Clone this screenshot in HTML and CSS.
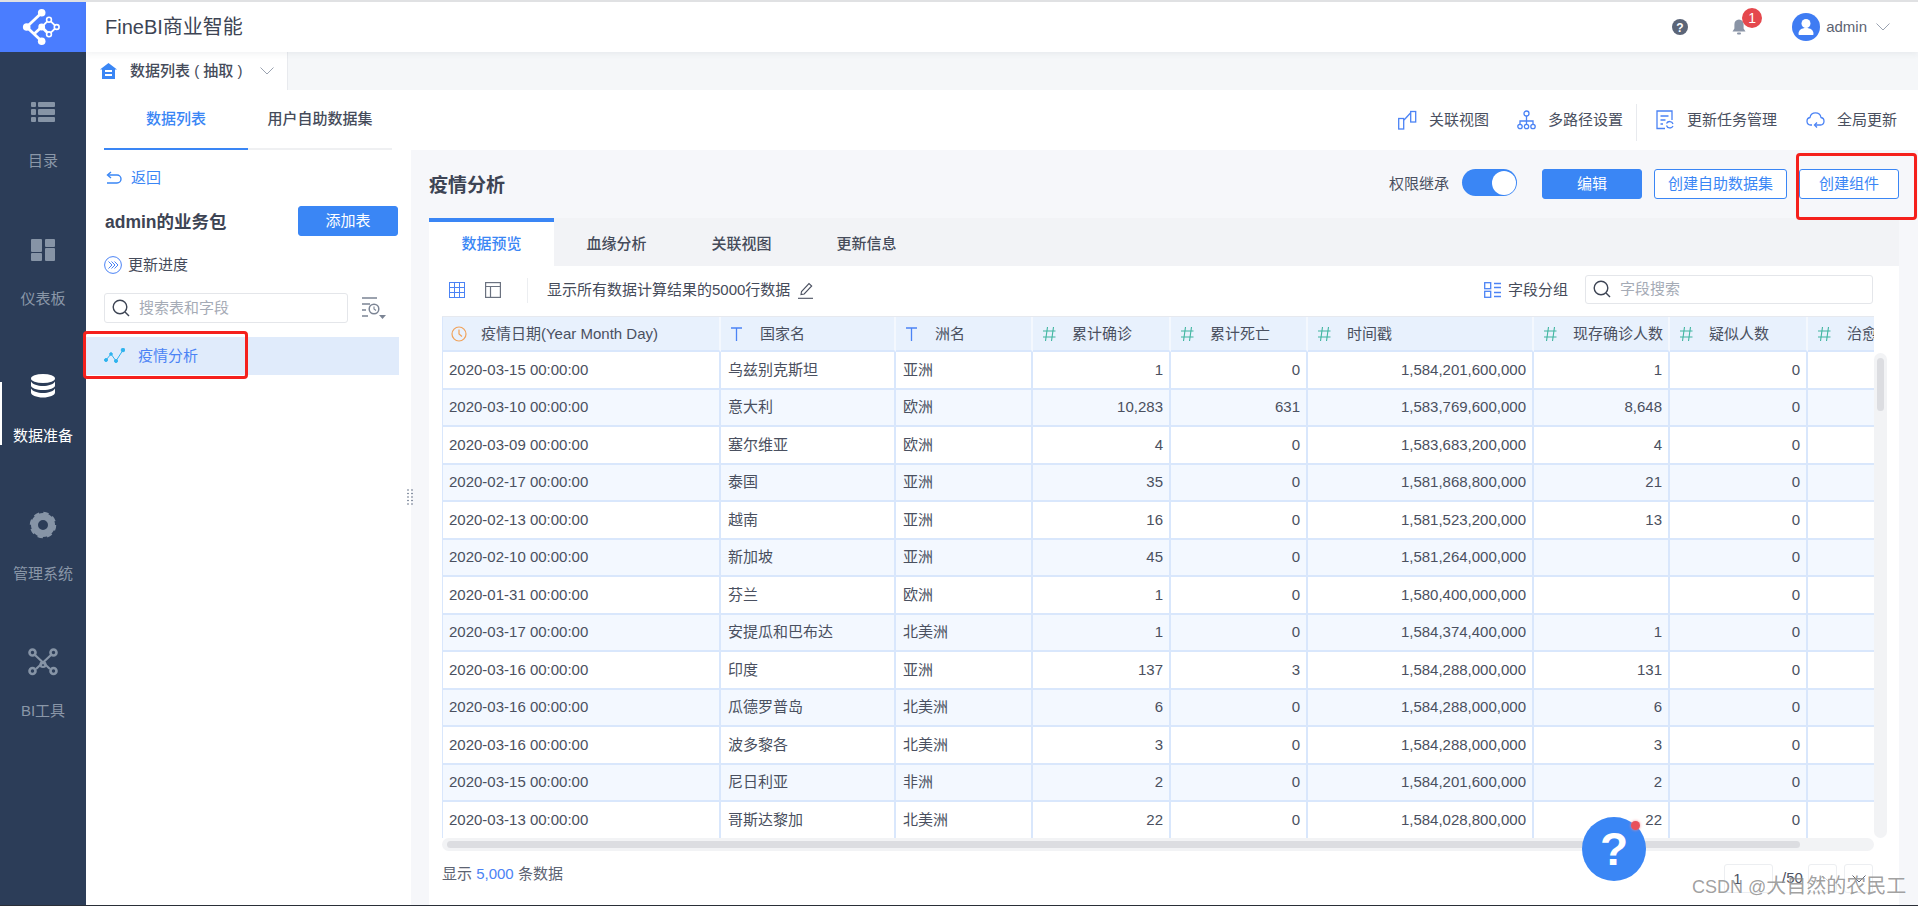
FILE: index.html
```html
<!DOCTYPE html>
<html lang="zh">
<head>
<meta charset="utf-8">
<title>FineBI商业智能</title>
<link rel="stylesheet" href="styles.css">
</head>
<body>
<div class="app">
  <aside class="sidebar">
    <div class="logo">
      <svg width="86" height="50" viewBox="0 0 86 50">
        <g fill="none" stroke="#fff" stroke-width="2.800">
          <path d="M41.7 10.7 26.7 25 41.7 39.3M34 32 41.7 25 49 32.3"/>
        </g>
        <path d="M49 32.300 56.700 25 49 17.700 41.700 25" fill="none" stroke="#fff" stroke-width="1.800"/>
        <g fill="#fff"><circle cx="41.7" cy="10.7" r="3.8"/><circle cx="26.7" cy="25" r="3.8"/><circle cx="41.7" cy="25" r="3.4"/><circle cx="41.7" cy="39.3" r="3.8"/></g>
        <g fill="#4a7dff" stroke="#fff" stroke-width="1.600"><circle cx="49" cy="17.7" r="2.4"/><circle cx="56.7" cy="25" r="2.4"/><circle cx="49" cy="32.3" r="2.4"/></g>
      </svg>
    </div>
    <nav class="nav">
      <a class="nav-item">
        <svg width="30" height="30" viewBox="0 0 30 30" fill="#8694a6"><rect x="3" y="5" width="5" height="5" rx="1"/><rect x="10" y="5" width="17" height="5" rx="1"/><rect x="3" y="12" width="5" height="6" rx="1"/><rect x="10" y="12" width="17" height="6" rx="1"/><rect x="3" y="20" width="5" height="5" rx="1"/><rect x="10" y="20" width="17" height="5" rx="1"/></svg>
        <span>目录</span>
      </a>
      <a class="nav-item">
        <svg width="30" height="30" viewBox="0 0 30 30" fill="#8694a6"><rect x="3" y="4" width="11" height="13" rx="1"/><rect x="17" y="4" width="10" height="8" rx="1"/><rect x="3" y="18" width="11" height="8" rx="1"/><rect x="17" y="13" width="10" height="13" rx="1"/></svg>
        <span>仪表板</span>
      </a>
      <a class="nav-item active">
        <svg width="30" height="30" viewBox="0 0 30 30" fill="#fff"><ellipse cx="15" cy="6.5" rx="12" ry="4.5"/><path d="M3 9.500v4c0 2.600 5.400 4.500 12 4.500s12-1.900 12-4.500v-4c-1.600 2.800-6.500 4.500-12 4.500S4.600 12.300 3 9.500z"/><path d="M3 16.500v4c0 2.600 5.400 5 12 5s12-2.400 12-5v-4c-1.600 2.800-6.500 4.500-12 4.500s-10.400-1.700-12-4.500z"/></svg>
        <span>数据准备</span>
      </a>
      <a class="nav-item">
        <svg width="30" height="30" viewBox="0 0 30 30" fill="none" stroke="#8694a6"><circle cx="15" cy="15" r="8.500" stroke-width="7"/><circle cx="15" cy="15" r="11.500" stroke-width="3.500" stroke-dasharray="5.030 4"/></svg>
        <span>管理系统</span>
      </a>
      <a class="nav-item">
        <svg width="30" height="30" viewBox="0 0 30 30" fill="none" stroke="#8694a6" stroke-width="2.600"><circle cx="4.500" cy="5.500" r="3"/><circle cx="25.500" cy="5.500" r="3"/><circle cx="4.500" cy="24" r="3"/><circle cx="25.500" cy="24" r="3"/><circle cx="15" cy="17.500" r="2.500" stroke-width="2.200"/><path d="M7 8 22 22M23 8 8 22" stroke-width="2.200"/></svg>
        <span>BI工具</span>
      </a>
    </nav>
  </aside>

  <main class="main">
    <header class="topbar">
      <div class="brand">FineBI商业智能</div>
      <div class="top-right">
        <svg class="help-ic" width="16" height="16" viewBox="0 0 16 16"><circle cx="8" cy="8" r="8" fill="#5b6578"/><text x="8" y="12.500" class="help-q">?</text></svg>
        <div class="bell">
          <svg width="16" height="18" viewBox="0 0 16 18" fill="#8a94a6"><path d="M8 1.500c-3 0-4.600 2.200-4.600 5v4L1.500 13.500h13l-1.900-3v-4c0-2.800-1.600-5-4.600-5z"/><rect x="6" y="14.500" width="4" height="2" rx="1"/></svg>
          <span class="badge">1</span>
        </div>
        <svg class="avatar" width="28" height="28" viewBox="0 0 28 28"><circle cx="14" cy="14" r="14" fill="#3f7cf3"/><circle cx="14" cy="10.500" r="4.500" fill="#fff"/><path d="M6.500 21c0-4 3-6 7.500-6s7.500 2 7.500 6c0 .6-.4 1-1 1h-13c-.6 0-1-.4-1-1z" fill="#fff"/></svg>
        <span class="user">admin</span>
        <svg width="14" height="8" viewBox="0 0 14 8" fill="none" stroke="#9aa2b0"><path d="M.5.500 7 7 13.500.500"/></svg>
      </div>
    </header>

    <div class="strip">
      <div class="strip-tab">
        <svg width="17" height="16" viewBox="0 0 17 16"><path d="M8.500 0 0 6.500h2V16h13V6.500h2z" fill="#3a86f5"/><rect x="5" y="7" width="7" height="2" fill="#fff"/><rect x="5" y="11" width="7" height="2" fill="#fff"/></svg>
        <span>数据列表 ( 抽取 )</span>
        <svg width="14" height="8" viewBox="0 0 14 8" fill="none" stroke="#9aa2b0"><path d="M.5.500 7 7 13.500.500"/></svg>
      </div>
    </div>

    <div class="toolrow">
      <div class="left-tabs">
        <div class="left-tab on">数据列表</div>
        <div class="left-tab">用户自助数据集</div>
      </div>
      <div class="tools">
        <div class="tool t1">
          <svg width="19" height="20" viewBox="0 0 19 20" fill="none" stroke="#4b83f5" stroke-width="1.300"><rect x=".7" y="8.500" width="5" height="10.500"/><rect x="12.700" y="1.500" width="5" height="10.500"/><path d="M6 10 12.500 3"/></svg>
          <span>关联视图</span>
        </div>
        <div class="tool t2">
          <svg width="19" height="20" viewBox="0 0 19 20" fill="none" stroke="#4b83f5" stroke-width="1.300"><circle cx="9.500" cy="3.500" r="2.500"/><circle cx="3" cy="16.500" r="2.200"/><circle cx="9.500" cy="16.500" r="2.200"/><circle cx="16" cy="16.500" r="2.200"/><path d="M9.500 6v8M3 14v-3h13v3"/></svg>
          <span>多路径设置</span>
        </div>
        <i class="tool-sep"></i>
        <div class="tool t3">
          <svg width="19" height="20" viewBox="0 0 19 20" fill="none" stroke="#4b83f5" stroke-width="1.300"><path d="M9 18.500H1V1h15v9"/><path d="M4.500 6h8M4.500 10h5M4.500 14h2.500"/><path d="M17 14a3.500 3.500 0 0 0-6.500-.5M10.500 15.500a3.500 3.500 0 0 0 6.500 .5"/></svg>
          <span>更新任务管理</span>
        </div>
        <div class="tool t4">
          <svg width="19" height="20" viewBox="0 0 19 20" fill="none" stroke="#4b83f5" stroke-width="1.300"><path d="M6 15H4.500a3.800 3.800 0 0 1-.5-7.500 5.600 5.600 0 0 1 11 0 3.800 3.800 0 0 1-.5 7.500H9"/><path d="M11 12.500 8.500 15l2.500 2.500"/></svg>
          <span>全局更新</span>
        </div>
      </div>
    </div>

    <div class="workspace">
      <section class="left">
        <div class="back">
          <svg width="16" height="14" viewBox="0 0 16 14" fill="none" stroke="#3a86f5" stroke-width="1.400"><path d="M5 1 1.500 4 5 7"/><path d="M2 4h9a3.800 3.800 0 0 1 0 8H1"/></svg>
          <span>返回</span>
        </div>
        <div class="pkg">
          <h2>admin的业务包</h2>
          <button class="btn solid add">添加表</button>
        </div>
        <div class="progress">
          <svg width="18" height="18" viewBox="0 0 18 18" fill="none" stroke="#4b83f5"><circle cx="9" cy="9" r="8.400"/><path d="M4.500 5.500 8 9l-3.500 3.500M7.500 5.500 11 9l-3.500 3.500M10.500 5.500 14 9l-3.500 3.500"/></svg>
          <span>更新进度</span>
        </div>
        <div class="search-row">
          <div class="searchbox left-search">
            <svg width="18" height="18" viewBox="0 0 18 18" fill="none" stroke="#3d4454" stroke-width="1.400"><circle cx="8" cy="8" r="6.800"/><path d="M13 13l4 4"/></svg>
            <span>搜索表和字段</span>
          </div>
          <svg width="24" height="22" viewBox="0 0 24 22" fill="none" stroke="#7b8494" stroke-width="1.500"><path d="M0 1h15M0 7h8M0 13h4M0 19h6"/><circle cx="12" cy="12" r="4.800"/><path d="M12 9.500V12l2 1.500" stroke-width="1.100"/><path d="M17 18h7l-3.500 4z" fill="#7b8494" stroke="none"/></svg>
        </div>
        <div class="list-item">
          <svg width="21" height="16" viewBox="0 0 21 16" fill="#2eb3ee" stroke="#2eb3ee"><path d="M2 12 7 6l5 7 7-11" fill="none" stroke-width="1"/><circle cx="2" cy="12" r="1.500"/><circle cx="7" cy="6" r="1.300"/><circle cx="12" cy="13" r="1.500"/><circle cx="19" cy="2" r="1.800"/></svg>
          <span>疫情分析</span>
        </div>
        <svg class="grip" width="6" height="16" viewBox="0 0 6 16" fill="#5c6a80"><circle cx="1" cy="1" r=".8"/><circle cx="5" cy="1" r=".8"/><circle cx="1" cy="4.500" r=".8"/><circle cx="5" cy="4.500" r=".8"/><circle cx="1" cy="8" r=".8"/><circle cx="5" cy="8" r=".8"/><circle cx="1" cy="11.500" r=".8"/><circle cx="5" cy="11.500" r=".8"/><circle cx="1" cy="15" r=".8"/><circle cx="5" cy="15" r=".8"/></svg>
      </section>

      <section class="right">
        <div class="head">
          <h1>疫情分析</h1>
          <div class="head-actions">
            <span class="perm">权限继承</span>
            <div class="switch"><i></i></div>
            <button class="btn solid edit">编辑</button>
            <button class="btn outline dataset">创建自助数据集</button>
            <button class="btn outline comp">创建组件</button>
          </div>
        </div>
        <div class="tabs">
          <div class="tab on">数据预览</div>
          <div class="tab">血缘分析</div>
          <div class="tab">关联视图</div>
          <div class="tab">更新信息</div>
        </div>
        <div class="content">
          <div class="subbar">
            <svg class="ic-grid" width="16" height="16" viewBox="0 0 16 16" fill="none" stroke="#4b83f5"><rect x=".5" y=".5" width="15" height="15"/><path d="M.5 5.500h15M.5 10.500h15M5.500 .5v15M10.500 .5v15"/></svg>
            <svg class="ic-layout" width="16" height="16" viewBox="0 0 16 16" fill="none" stroke="#6b7280" stroke-width="1.200"><rect x=".6" y=".6" width="14.800" height="14.800"/><path d="M.6 4.500h14.800M5.500 4.500v10.900"/></svg>
            <i class="sub-sep"></i>
            <span class="sub-text">显示所有数据计算结果的5000行数据</span>
            <svg class="ic-pen" width="15" height="17" viewBox="0 0 15 17" fill="none" stroke="#4a5060" stroke-width="1.100"><path d="M3 12.500 3.500 9.500 11 1.500l2.700 2.500-7.500 8z"/><path d="M0 16.300h15"/></svg>
            <div class="sub-right">
              <svg width="17" height="16" viewBox="0 0 17 16" fill="none" stroke="#4b83f5" stroke-width="1.300"><rect x=".7" y=".7" width="6" height="6"/><rect x=".7" y="9.300" width="6" height="6"/><path d="M10 1.500h7M10 5.500h7M10 10.500h7M10 14.500h7"/></svg>
              <span class="group-txt">字段分组</span>
              <div class="searchbox field-search">
                <svg width="18" height="18" viewBox="0 0 18 18" fill="none" stroke="#3d4454" stroke-width="1.400"><circle cx="8" cy="8" r="6.800"/><path d="M13 13l4 4"/></svg>
                <span>字段搜索</span>
              </div>
            </div>
          </div>

          <div class="table-area">
            <div class="table-clip">
              <div class="grid">
                <div class="row head-row">
                  <div class="cell"><svg width="16" height="16" viewBox="0 0 16 16" fill="none" stroke="#f0a25a" stroke-width="1.200"><circle cx="8" cy="8" r="7"/><path d="M8 3.500V8l3 2.500"/></svg><span>疫情日期(Year Month Day)</span></div>
                  <div class="cell"><svg width="16" height="16" viewBox="0 0 16 16" fill="none" stroke="#4b83f5" stroke-width="1.300"><path d="M1 2h11M6.500 2v13"/></svg><span>国家名</span></div>
                  <div class="cell"><svg width="16" height="16" viewBox="0 0 16 16" fill="none" stroke="#4b83f5" stroke-width="1.300"><path d="M1 2h11M6.500 2v13"/></svg><span>洲名</span></div>
                  <div class="cell"><svg width="16" height="16" viewBox="0 0 16 16" fill="none" stroke="#3fb5a0" stroke-width="1.100"><path d="M5.500 1 3.500 15M11.500 1 9.500 15M1 5h12.500M1 11h12.500"/></svg><span>累计确诊</span></div>
                  <div class="cell"><svg width="16" height="16" viewBox="0 0 16 16" fill="none" stroke="#3fb5a0" stroke-width="1.100"><path d="M5.500 1 3.500 15M11.500 1 9.500 15M1 5h12.500M1 11h12.500"/></svg><span>累计死亡</span></div>
                  <div class="cell"><svg width="16" height="16" viewBox="0 0 16 16" fill="none" stroke="#3fb5a0" stroke-width="1.100"><path d="M5.500 1 3.500 15M11.500 1 9.500 15M1 5h12.500M1 11h12.500"/></svg><span>时间戳</span></div>
                  <div class="cell"><svg width="16" height="16" viewBox="0 0 16 16" fill="none" stroke="#3fb5a0" stroke-width="1.100"><path d="M5.500 1 3.500 15M11.500 1 9.500 15M1 5h12.500M1 11h12.500"/></svg><span>现存确诊人数</span></div>
                  <div class="cell"><svg width="16" height="16" viewBox="0 0 16 16" fill="none" stroke="#3fb5a0" stroke-width="1.100"><path d="M5.500 1 3.500 15M11.500 1 9.500 15M1 5h12.500M1 11h12.500"/></svg><span>疑似人数</span></div>
                  <div class="cell"><svg width="16" height="16" viewBox="0 0 16 16" fill="none" stroke="#3fb5a0" stroke-width="1.100"><path d="M5.500 1 3.500 15M11.500 1 9.500 15M1 5h12.500M1 11h12.500"/></svg><span>治愈人数</span></div>
                </div>
                <div class="row"><div class="cell">2020-03-15 00:00:00</div><div class="cell">乌兹别克斯坦</div><div class="cell">亚洲</div><div class="cell num">1</div><div class="cell num">0</div><div class="cell num">1,584,201,600,000</div><div class="cell num">1</div><div class="cell num">0</div><div class="cell num"></div></div>
                <div class="row"><div class="cell">2020-03-10 00:00:00</div><div class="cell">意大利</div><div class="cell">欧洲</div><div class="cell num">10,283</div><div class="cell num">631</div><div class="cell num">1,583,769,600,000</div><div class="cell num">8,648</div><div class="cell num">0</div><div class="cell num"></div></div>
                <div class="row"><div class="cell">2020-03-09 00:00:00</div><div class="cell">塞尔维亚</div><div class="cell">欧洲</div><div class="cell num">4</div><div class="cell num">0</div><div class="cell num">1,583,683,200,000</div><div class="cell num">4</div><div class="cell num">0</div><div class="cell num"></div></div>
                <div class="row"><div class="cell">2020-02-17 00:00:00</div><div class="cell">泰国</div><div class="cell">亚洲</div><div class="cell num">35</div><div class="cell num">0</div><div class="cell num">1,581,868,800,000</div><div class="cell num">21</div><div class="cell num">0</div><div class="cell num"></div></div>
                <div class="row"><div class="cell">2020-02-13 00:00:00</div><div class="cell">越南</div><div class="cell">亚洲</div><div class="cell num">16</div><div class="cell num">0</div><div class="cell num">1,581,523,200,000</div><div class="cell num">13</div><div class="cell num">0</div><div class="cell num"></div></div>
                <div class="row"><div class="cell">2020-02-10 00:00:00</div><div class="cell">新加坡</div><div class="cell">亚洲</div><div class="cell num">45</div><div class="cell num">0</div><div class="cell num">1,581,264,000,000</div><div class="cell num"></div><div class="cell num">0</div><div class="cell num"></div></div>
                <div class="row"><div class="cell">2020-01-31 00:00:00</div><div class="cell">芬兰</div><div class="cell">欧洲</div><div class="cell num">1</div><div class="cell num">0</div><div class="cell num">1,580,400,000,000</div><div class="cell num"></div><div class="cell num">0</div><div class="cell num"></div></div>
                <div class="row"><div class="cell">2020-03-17 00:00:00</div><div class="cell">安提瓜和巴布达</div><div class="cell">北美洲</div><div class="cell num">1</div><div class="cell num">0</div><div class="cell num">1,584,374,400,000</div><div class="cell num">1</div><div class="cell num">0</div><div class="cell num"></div></div>
                <div class="row"><div class="cell">2020-03-16 00:00:00</div><div class="cell">印度</div><div class="cell">亚洲</div><div class="cell num">137</div><div class="cell num">3</div><div class="cell num">1,584,288,000,000</div><div class="cell num">131</div><div class="cell num">0</div><div class="cell num"></div></div>
                <div class="row"><div class="cell">2020-03-16 00:00:00</div><div class="cell">瓜德罗普岛</div><div class="cell">北美洲</div><div class="cell num">6</div><div class="cell num">0</div><div class="cell num">1,584,288,000,000</div><div class="cell num">6</div><div class="cell num">0</div><div class="cell num"></div></div>
                <div class="row"><div class="cell">2020-03-16 00:00:00</div><div class="cell">波多黎各</div><div class="cell">北美洲</div><div class="cell num">3</div><div class="cell num">0</div><div class="cell num">1,584,288,000,000</div><div class="cell num">3</div><div class="cell num">0</div><div class="cell num"></div></div>
                <div class="row"><div class="cell">2020-03-15 00:00:00</div><div class="cell">尼日利亚</div><div class="cell">非洲</div><div class="cell num">2</div><div class="cell num">0</div><div class="cell num">1,584,201,600,000</div><div class="cell num">2</div><div class="cell num">0</div><div class="cell num"></div></div>
                <div class="row"><div class="cell">2020-03-13 00:00:00</div><div class="cell">哥斯达黎加</div><div class="cell">北美洲</div><div class="cell num">22</div><div class="cell num">0</div><div class="cell num">1,584,028,800,000</div><div class="cell num">22</div><div class="cell num">0</div><div class="cell num"></div></div>
              </div>
            </div>
            <div class="vbar"><i></i></div>
            <div class="hbar"><i></i></div>
          </div>

          <div class="foot">
            <div class="count">显示 <b>5,000</b> 条数据</div>
            <div class="pager">
              <div class="page-box cur">1</div>
              <span class="page-total">/50</span>
              <div class="page-box arrow"><svg width="14" height="8" viewBox="0 0 14 8" fill="none" stroke="#d0d4da"><path d="M.5 7.500 7 1l6.500 6.500"/></svg></div>
              <div class="page-box arrow"><svg width="14" height="8" viewBox="0 0 14 8" fill="none" stroke="#5c6372"><path d="M.5.500 7 7 13.500.500"/></svg></div>
            </div>
          </div>
        </div>
      </section>
    </div>
  </main>

  <div class="mark mark-item"></div>
  <div class="mark mark-comp"></div>
  <div class="fab">?<i></i></div>
  <div class="watermark"><span class="wm-lat">CSDN @</span>大自然的农民工</div>
</div>
</body>
</html>
```

FILE: styles.css
```css
* { box-sizing: border-box; }
html, body { margin: 0; height: 100%; overflow: hidden; }
body { font-family: "Liberation Sans", "Noto Sans CJK SC", sans-serif; font-size: 15px; color: #454b5a; background: #fff; }
h1, h2 { margin: 0; }
svg { display: block; flex: none; }

.app { position: relative; display: flex; width: 1918px; height: 906px; border-top: 2px solid #e0e1e3; border-bottom: 1px solid #2a2f38; overflow: hidden; }

.sidebar { width: 86px; flex: none; background: #2c3d58; display: flex; flex-direction: column; }
.logo { height: 50px; background: #4a7dff; }
.nav { display: flex; flex-direction: column; gap: 63.5px; padding-top: 45px; }
.nav-item { position: relative; display: flex; flex-direction: column; align-items: center; height: 74px; color: #8a97a8; }
.nav-item span { margin-top: 24px; line-height: 20px; }
.nav-item.active { color: #fff; }
.nav-item.active::before { content: ""; position: absolute; left: 0; top: 10px; width: 2px; height: 63px; background: #fff; }

.main { flex: 1; min-width: 0; display: flex; flex-direction: column; }

.topbar { position: relative; z-index: 2; height: 50px; flex: none; background: #fff; box-shadow: 0 2px 6px rgba(60, 70, 90, .07); display: flex; align-items: center; justify-content: space-between; padding: 0 28px 0 19px; }
.brand { font-size: 20px; line-height: 28px; color: #3d4454; }
.top-right { display: flex; align-items: center; }
.help-q { font: bold 12px "Liberation Sans", sans-serif; fill: #fff; text-anchor: middle; }
.bell { position: relative; margin-left: 43px; }
.badge { position: absolute; left: 11px; top: -10px; width: 20px; height: 20px; border-radius: 50%; background: #e5484d; color: #fff; font-size: 14px; line-height: 20px; text-align: center; }
.avatar { margin-left: 45px; }
.user { margin: 0 9px 0 6px; color: #5c6372; line-height: 20px; }

.strip { height: 38px; flex: none; background: #f5f7f9; }
.strip-tab { width: 202px; height: 38px; background: #fff; border-right: 1px solid #e8eaee; display: flex; align-items: center; padding-left: 14px; }
.strip-tab span { width: 130px; margin-left: 13px; font-weight: 500; white-space: nowrap; color: #454b5a; line-height: 20px; }

.toolrow { height: 60px; flex: none; display: flex; background: #fff; }
.left-tabs { width: 288px; margin-left: 18px; display: flex; border-bottom: 2px solid #eff0f2; }
.left-tab { width: 144px; height: 60px; text-align: center; line-height: 58px; font-weight: 500; color: #454b5a; }
.left-tab.on { color: #3a86f5; border-bottom: 2px solid #3a86f5; }
.tools { margin-left: auto; display: flex; align-items: center; padding-right: 21px; }
.tool { display: flex; align-items: center; gap: 12px; line-height: 20px; color: #4a5060; }
.t2 { margin-left: 28px; }
.tool-sep { width: 1px; height: 37px; margin: 4px 19px 0 13px; background: #e8eaee; }
.t4 { margin-left: 29px; }

.workspace { flex: 1; min-height: 0; display: flex; }

.left { position: relative; width: 325px; flex: none; padding: 18px 13px 0 18px; background: #fff; }
.back { display: flex; align-items: center; gap: 9px; height: 20px; color: #3a86f5; line-height: 20px; margin-left: 2px; }
.pkg { display: flex; align-items: center; justify-content: space-between; height: 30px; margin-top: 18px; }
.pkg h2 { font-size: 17.500px; font-weight: 700; margin: 2px 0 0 1px; color: #3d4454; line-height: 24px; }
.btn { height: 30px; padding: 0; border-radius: 3px; font: inherit; line-height: 28px; cursor: pointer; }
.btn.solid { background: #3a86f5; border: 1px solid #3a86f5; color: #fff; }
.btn.outline { background: #fff; border: 1px solid #3a86f5; color: #3a86f5; }
.add { width: 100px; }
.progress { display: flex; align-items: center; gap: 6px; height: 20px; margin-top: 19px; line-height: 20px; }
.search-row { display: flex; align-items: center; gap: 14px; margin-top: 18px; }
.searchbox { display: flex; align-items: center; background: #fff; border: 1px solid #e4e6ea; border-radius: 3px; color: #a5abb6; line-height: 20px; }
.left-search { width: 244px; height: 30px; gap: 9px; padding-left: 7px; }
.list-item { display: flex; align-items: center; gap: 13px; width: 313px; height: 38px; margin: 14px 0 0 -18px; padding-left: 18px; background: #e0ebfb; color: #4b83f5; line-height: 20px; }
.grip { position: absolute; left: 321px; top: 339px; }

.right { flex: 1; min-width: 0; display: flex; flex-direction: column; padding: 0 19px 0 18px; background: #f6f7fa; }
.head { height: 68px; flex: none; display: flex; align-items: center; justify-content: space-between; }
.head h1 { font-size: 19px; font-weight: 700; margin-top: 4px; color: #3d4454; line-height: 26px; }
.head-actions { display: flex; align-items: center; }
.perm { line-height: 20px; color: #4a5060; }
.switch { display: flex; justify-content: flex-end; align-items: center; width: 55px; height: 27px; margin: -3px 25px 0 13px; padding-right: 1px; border-radius: 14px; background: #3a86f5; }
.switch i { width: 24px; height: 24px; border-radius: 50%; background: #fff; }
.edit { width: 100px; }
.dataset { width: 133px; margin-left: 12px; }
.comp { width: 100px; margin-left: 12px; }

.tabs { height: 48px; flex: none; display: flex; background: #f2f3f6; }
.tab { width: 125px; text-align: center; line-height: 52px; font-weight: 500; color: #454b5a; }
.tab.on { background: #fff; border-top: 4px solid #3a86f5; line-height: 44px; color: #3a86f5; }

.content { flex: 1; min-height: 0; display: flex; flex-direction: column; padding-left: 13px; background: #fff; }
.subbar { height: 50px; flex: none; display: flex; align-items: center; padding: 0 26px 2px 0; line-height: 20px; }
.ic-grid { margin-left: 7px; }
.ic-layout { margin-left: 20px; }
.sub-sep { width: 1px; height: 25px; margin: 0 19px 0 26px; background: #eceef1; }
.ic-pen { margin-left: 8px; }
.sub-right { margin-left: auto; width: 389px; display: flex; align-items: center; }
.group-txt { margin: 0 17px 0 7px; }
.field-search { width: 288px; height: 29px; gap: 9px; padding-left: 7px; margin-top: -2px; }

.table-area { display: grid; grid-template-columns: 1432px 13px; grid-template-rows: 522px 13px; flex: none; }
.table-clip { overflow: hidden; border-top: 1px solid #e6e9ef; }
.grid { display: grid; width: 1566px; grid-template-columns: 279px 175px 137px 138px 137px 226px 136px 138px 200px; grid-template-rows: 35px repeat(13, 37.5px); }
.row { display: contents; }
.cell { display: flex; align-items: center; padding: 0 7px; border-right: 2px solid #d9e7fc; border-bottom: 2px solid #d9e7fc; white-space: nowrap; overflow: hidden; line-height: 20px; color: #4a5060; }
.cell:first-child { border-left: 1px solid #d9e7fc; padding-left: 6px; }
.cell.num { justify-content: flex-end; padding-right: 6px; }
.row:nth-child(odd) .cell { background: #f3f8ff; }
.row.head-row .cell { background: #e8f1fd; gap: 14px; padding-left: 9px; border-right-color: #f4f8fe; }
.row.head-row .cell:first-child { padding-left: 8px; }
.vbar { margin-top: 37px; padding: 5px 3px 0; background: #f2f3f5; border-radius: 7px; }
.vbar i { display: block; height: 53px; border-radius: 4px; background: #dcdde1; }
.hbar { padding: 3px 5px; background: #f2f3f5; border-radius: 7px; }
.hbar i { display: block; width: 1353px; height: 7px; border-radius: 4px; background: #dcdde1; }

.foot { flex: 1; display: flex; justify-content: space-between; padding: 13px 26px 0 0; }
.count { line-height: 20px; color: #5c6372; }
.count b { font-weight: 400; color: #4b83f5; }
.pager { display: flex; align-items: flex-start; }
.page-box { height: 29px; border: 1px solid #eceef1; border-radius: 3px; display: flex; align-items: center; justify-content: center; }
.cur { width: 49px; color: #4a5060; padding-right: 22px; }
.page-total { width: 35px; padding-left: 9px; line-height: 27px; color: #4a5060; }
.arrow { width: 29px; }
.arrow + .arrow { margin-left: 7px; }

.mark { position: absolute; border: 3px solid #f5201c; border-radius: 4px; pointer-events: none; }
.mark-item { left: 83px; top: 329px; width: 165px; height: 48px; }
.mark-comp { left: 1796px; top: 151px; width: 121px; height: 67px; }

.fab { position: absolute; left: 1582px; top: 815px; width: 64px; height: 64px; border-radius: 50%; background: #3a86f5; color: #fff; font-size: 46px; font-weight: 700; line-height: 64px; text-align: center; }
.fab i { position: absolute; left: 49px; top: 4px; width: 9px; height: 9px; border-radius: 50%; background: #e8505a; box-shadow: 0 0 3px #f08a90; }

.watermark { position: absolute; left: 1692px; top: 868px; font-size: 20px; line-height: 32px; color: rgba(100, 100, 100, .62); white-space: nowrap; text-shadow: 0 0 1px rgba(255, 255, 255, .6); }
.wm-lat { font-size: 18px; }
```
